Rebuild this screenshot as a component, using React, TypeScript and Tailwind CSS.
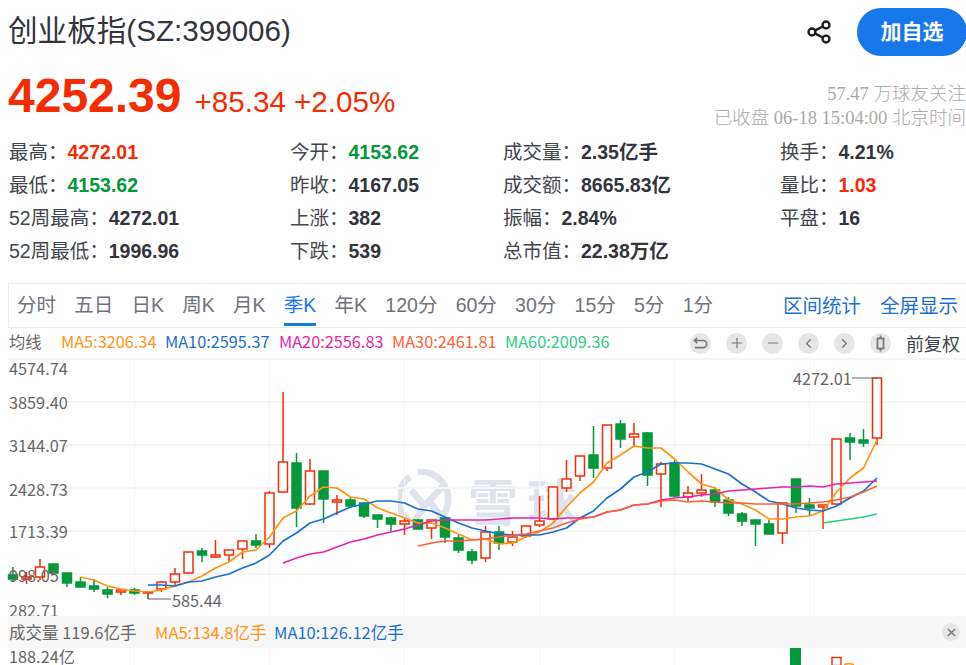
import type { ReactNode } from "react";
import { Minus, Plus, ChevronLeft, ChevronRight } from "lucide-react";

const RED = "#f52c02";
const GREEN = "#03983a";
const SANS = "font-['Liberation_Sans','Noto_Sans_CJK_SC',sans-serif]";
const CJK = "font-['Noto_Sans_CJK_SC',sans-serif]";

type Stat = { label: string; value: string; tone?: "red" | "green" };

const STAT_COLUMNS: { width: string; rows: Stat[] }[] = [
  {
    width: "w-[281px]",
    rows: [
      { label: "最高：", value: "4272.01", tone: "red" },
      { label: "最低：", value: "4153.62", tone: "green" },
      { label: "52周最高：", value: "4272.01" },
      { label: "52周最低：", value: "1996.96" },
    ],
  },
  {
    width: "w-[213px]",
    rows: [
      { label: "今开：", value: "4153.62", tone: "green" },
      { label: "昨收：", value: "4167.05" },
      { label: "上涨：", value: "382" },
      { label: "下跌：", value: "539" },
    ],
  },
  {
    width: "w-[277px]",
    rows: [
      { label: "成交量：", value: "2.35亿手" },
      { label: "成交额：", value: "8665.83亿" },
      { label: "振幅：", value: "2.84%" },
      { label: "总市值：", value: "22.38万亿" },
    ],
  },
  {
    width: "w-[150px]",
    rows: [
      { label: "换手：", value: "4.21%" },
      { label: "量比：", value: "1.03", tone: "red" },
      { label: "平盘：", value: "16" },
    ],
  },
];

const PERIODS = ["分时", "五日", "日K", "周K", "月K", "季K", "年K", "120分", "60分", "30分", "15分", "5分", "1分"];

const MA_LEGEND = [
  { text: "MA5:3206.34", className: "text-[#ff9414] w-[104px] mb-[4px]" },
  { text: "MA10:2595.37", className: "text-[#1a6fd0] w-[114px] mb-[4px]" },
  { text: "MA20:2556.83", className: "text-[#e624a8] w-[113px] mb-[4px]" },
  { text: "MA30:2461.81", className: "text-[#ff5f36] w-[113px] mb-[4px]" },
  { text: "MA60:2009.36", className: "text-[#2ecb85] mb-[4px]" },
];

// [wickTop, bodyTop, bodyBottom, wickBottom, 1 = red hollow / 0 = green solid]
const CANDLES: [number, number, number, number, number][] = [
  [567, 575, 579, 582, 0], [572, 577, 579, 584, 1], [559, 567, 577, 580, 1], [564, 564, 573, 573, 0],
  [573, 573, 583, 587, 0], [577, 582, 587, 587, 0], [579, 586, 589, 592, 0], [587, 590, 594, 598, 0],
  [589, 590, 592, 595, 1], [588, 590, 593, 595, 0], [591, 592, 593, 599, 1], [581, 582, 589, 592, 1],
  [568, 574, 582, 585, 1], [552, 552, 573, 574, 1], [548, 551, 555, 562, 0], [540, 555, 557, 558, 1],
  [550, 550, 555, 562, 1], [541, 541, 549, 559, 1], [534, 541, 545, 548, 0], [491, 493, 544, 548, 1],
  [392, 462, 492, 493, 1], [453, 463, 508, 527, 0], [459, 471, 504, 505, 1], [471, 471, 499, 523, 0],
  [495, 500, 502, 515, 1], [497, 500, 506, 508, 0], [502, 503, 516, 518, 0], [515, 515, 519, 528, 0],
  [517, 518, 524, 531, 0], [519, 521, 524, 535, 1], [519, 520, 529, 529, 0], [520, 520, 528, 539, 1],
  [518, 518, 537, 543, 0], [535, 538, 550, 553, 0], [549, 552, 560, 564, 0], [526, 532, 558, 562, 1],
  [526, 532, 543, 550, 0], [531, 537, 542, 546, 1], [526, 526, 536, 538, 1], [496, 521, 525, 527, 1],
  [487, 487, 519, 520, 1], [460, 479, 488, 492, 1], [456, 456, 476, 481, 1], [426, 455, 468, 478, 0],
  [425, 425, 468, 471, 1], [420, 424, 439, 448, 0], [423, 434, 437, 446, 1], [432, 433, 475, 486, 0],
  [462, 464, 474, 507, 1], [460, 463, 496, 497, 0], [486, 493, 497, 501, 1], [474, 490, 493, 497, 1],
  [487, 490, 502, 507, 0], [497, 500, 513, 516, 0], [512, 514, 521, 526, 0], [520, 520, 524, 546, 0],
  [520, 524, 534, 534, 0], [503, 503, 533, 544, 1], [479, 479, 506, 513, 0], [498, 505, 508, 516, 0],
  [505, 505, 507, 529, 1], [439, 439, 504, 505, 1], [433, 438, 442, 460, 0], [429, 440, 443, 447, 0],
  [378, 378, 438, 445, 1],
];

const candleX = (i: number) => 13 + i * 13.5;
const toPoints = (start: number, ys: number[]) =>
  ys.map((y, i) => `${candleX(start + i).toFixed(1)},${y}`).join(" ");

const MA5 = [577, 580, 586, 589, 591, 592, 590, 586, 582, 576, 568, 562, 552, 550, 537, 518, 511, 496, 487, 488, 497, 499, 508, 513, 518, 523, 523, 528, 534, 540, 539, 544, 543, 537, 532, 523, 507, 493, 482, 463, 455, 446, 448, 448, 459, 472, 484, 488, 500, 504, 510, 519, 519, 517, 516, 511, 492, 478, 468, 440];
const MA10 = [585, 585, 586, 582, 581, 577, 574, 568, 563, 555, 541, 533, 523, 519, 513, 507, 504, 501, 501, 503, 509, 511, 517, 523, 528, 531, 534, 535, 535, 535, 532, 528, 518, 511, 498, 489, 477, 472, 464, 463, 463, 464, 469, 474, 484, 492, 501, 504, 508, 510, 511, 506, 498, 491, 478];
const MA20 = [563, 558, 554, 552, 547, 542, 539, 535, 532, 529, 525, 521, 520, 520, 520, 520, 519, 518, 518, 518, 519, 518, 518, 517, 512, 510, 505, 504, 500, 498, 497, 495, 494, 491, 490, 489, 488, 487, 487, 486, 487, 484, 483, 482, 481];
const MA30 = [546, 543, 541, 541, 540, 539, 537, 535, 534, 531, 528, 523, 519, 517, 512, 510, 505, 504, 501, 500, 502, 501, 502, 503, 503, 504, 504, 504, 504, 503, 502, 500, 497, 492, 486];
const MA60 = [523, 521, 519, 517, 514];

const Y_LABELS = [
  { text: "4574.74", top: "top-[357px]" },
  { text: "3859.40", top: "top-[391px]" },
  { text: "3144.07", top: "top-[434px]" },
  { text: "2428.73", top: "top-[478px]" },
  { text: "1713.39", top: "top-[520px]" },
  { text: "998.05", top: "top-[564px]" },
  { text: "282.71", top: "top-[599px]" },
];

const CandleStickIcon = () => (
  <svg viewBox="0 0 21 21" className="w-[21px] h-[21px]" fill="none" stroke="#777" strokeWidth="1.8">
    <rect x="7.5" y="5.5" width="6" height="10" />
    <path d="M10.5 2.5v3M10.5 15.5v3" />
  </svg>
);

const UndoIcon = () => (
  <svg viewBox="0 0 21 21" className="w-[21px] h-[21px]" fill="none" stroke="#777" strokeWidth="1.7">
    <path d="M4.5 7.5h8.5a3.6 3.6 0 0 1 0 7.2H5" />
    <path d="M7.3 4.8 4.5 7.5l2.8 2.7" />
  </svg>
);

const ToolButton = ({ children }: { children: ReactNode }) => (
  <span className="flex items-center justify-center w-[21px] h-[21px] rounded-full bg-[#e6e6e6] text-[#777]">
    {children}
  </span>
);

const PriceChart = () => (
  <svg width="966" height="665" viewBox="0 0 966 665" fill="none">
    {/* grid */}
    <g stroke="#f5f5f5">
      {[359, 402, 445, 488, 531, 574].map((y) => (
        <path key={y} d={`M8 ${y}H966`} strokeWidth="2" />
      ))}
      {[134.5, 269.5, 404.5, 539.5, 674.5, 809.5].map((x) => (
        <path key={x} d={`M${x} 359V665`} strokeWidth="1" />
      ))}
    </g>

    {/* candles */}
    {CANDLES.map(([wickTop, bodyTop, bodyBottom, wickBottom, up], i) => {
      const x = candleX(i);
      const color = up ? RED : GREEN;
      return (
        <g key={i} stroke={color} strokeWidth="1.5">
          <path d={`M${x} ${wickTop}V${bodyTop}M${x} ${bodyBottom}V${wickBottom}`} />
          <rect
            x={x - 4.5}
            y={bodyTop}
            width={9}
            height={Math.max(bodyBottom - bodyTop, 1)}
            fill={up ? "#fff" : color}
          />
        </g>
      );
    })}

    {/* moving averages */}
    <g strokeWidth="1.7" strokeLinejoin="round">
      <polyline points={toPoints(5, MA5)} stroke="#ff9414" />
      <polyline points={toPoints(10, MA10)} stroke="#1a6fd0" />
      <polyline points={toPoints(20, MA20)} stroke="#e624a8" />
      <polyline points={toPoints(30, MA30)} stroke="#ff5f36" />
      <polyline points={toPoints(60, MA60)} stroke="#2ecb85" />
    </g>

    {/* high / low markers */}
    <path d="M148 593V599H171M852 378H877" stroke="#666" strokeWidth="1" />

    {/* volume bars under the band */}
    <rect x="790" y="648" width="11" height="17" fill={GREEN} />
    <rect x="832" y="657.5" width="9" height="8" fill="#fff" stroke={RED} strokeWidth="1.4" />
    <path d="M844 664.5Q849 663 854 664.5" stroke="#ff9414" strokeWidth="1.5" />
  </svg>
);

const Watermark = () => (
  <div className="absolute left-[398px] top-[469px] flex items-center gap-[10px]">
    <svg width="60" height="60" viewBox="0 0 60 60" fill="none" stroke="#dfe3ee" strokeWidth="6.5">
      <path d="M20 3A27 27 0 1 1 26 57" />
      <path d="M12 8A27 27 0 0 0 15 54L27 37L13 21" />
      <path d="M45 17L31 32L44 48" />
    </svg>
    <span className={`${CJK} text-[50px] leading-[60px] tracking-[9px] font-bold text-[#dfe3ee]`}>雪球</span>
  </div>
);

export default function App() {
  return (
    <div className={`relative w-[966px] h-[665px] overflow-hidden bg-white ${SANS} text-[#33353c]`}>
      {/* title row */}
      <div className="flex items-center h-[48px] mt-[8px] pl-[8px]">
        <h1 className="text-[29.6px] font-normal leading-[48px] -mt-[2px]">创业板指(SZ:399006)</h1>
        <svg viewBox="0 0 24 24" className="ml-auto mr-[25px] w-[26px] h-[26px]" fill="none" stroke="#1c1d22" strokeWidth="2.2">
          <circle cx="18.5" cy="5.5" r="3.2" />
          <circle cx="18.5" cy="18.5" r="3.2" />
          <circle cx="5.5" cy="12" r="3.2" />
          <path d="M8.4 10.5l7.2-3.6M8.4 13.5l7.2 3.6" />
        </svg>
        <button className="w-[110px] h-[48px] rounded-full bg-[#1877ea] text-white text-[21px] font-bold shrink-0 -mr-px">
          加自选
        </button>
      </div>

      {/* price row */}
      <div className="flex items-start pl-[8px] h-[66px] mt-[8px]">
        <div className="flex items-baseline" style={{ color: RED }}>
          <span className="text-[48px] leading-[64px] font-bold">4252.39</span>
          <span className="text-[29.6px] leading-[64px] ml-[13px]">+85.34 +2.05%</span>
        </div>
        <div className="ml-auto mt-[18px] text-right text-[18.5px] leading-[24px] text-[#a9a9a9] whitespace-nowrap font-['Liberation_Serif','Noto_Sans_CJK_SC',serif] font-light">
          <p>57.47 万球友关注</p>
          <p>已收盘 06-18 15:04:00 北京时间</p>
        </div>
      </div>

      {/* quote stats */}
      <div className="flex pl-[9px] h-[132px] mt-[6px]">
        {STAT_COLUMNS.map((col) => (
          <div key={col.rows[0].label} className={`${col.width} shrink-0`}>
            {col.rows.map((row) => (
              <div key={row.label} className="h-[33px] leading-[33px] text-[19.5px] whitespace-nowrap">
                <span className="text-[#44464d]">{row.label}</span>
                <span
                  className={`font-bold ${
                    row.tone === "red" ? "text-[#f52c02]" : row.tone === "green" ? "text-[#03983a]" : ""
                  }`}
                >
                  {row.value}
                </span>
              </div>
            ))}
          </div>
        ))}
      </div>

      {/* period tabs */}
      <div className="flex items-center h-[45px] ml-[8px] mt-[15px] pl-[8px] pr-[8px] border border-r-0 border-[#ececec] text-[19.5px] text-[#70727a]">
        <div className="flex gap-[18.25px] h-[42px] self-start">
          {PERIODS.map((p) => (
            <span
              key={p}
              className={
                p === "季K"
                  ? "flex items-center text-[#1877ea] border-b-[3px] border-[#1877ea] pt-[5px]"
                  : "flex items-center pt-[2px]"
              }
            >
              {p}
            </span>
          ))}
        </div>
        <div className="ml-auto flex gap-[19px] mt-[2px] text-[#1a6fd0]">
          <span>区间统计</span>
          <span>全屏显示</span>
        </div>
      </div>

      {/* MA legend and chart tools */}
      <div className={`${CJK} flex items-center h-[30px] pl-[9px] text-[16.3px] whitespace-nowrap`}>
        <span className="text-[#666] w-[52px] mb-[4px]">均线</span>
        {MA_LEGEND.map((m) => (
          <span key={m.text} className={m.className}>
            {m.text}
          </span>
        ))}
        <div className="ml-auto mr-[6px] flex items-center gap-[15px]">
          <ToolButton>
            <UndoIcon />
          </ToolButton>
          <ToolButton>
            <Plus size={16} strokeWidth={1.8} />
          </ToolButton>
          <ToolButton>
            <Minus size={16} strokeWidth={1.8} />
          </ToolButton>
          <ToolButton>
            <ChevronLeft size={15} strokeWidth={2} />
          </ToolButton>
          <ToolButton>
            <ChevronRight size={15} strokeWidth={2} />
          </ToolButton>
          <ToolButton>
            <CandleStickIcon />
          </ToolButton>
          <span className="text-[18px] text-[#44464d]">前复权</span>
        </div>
      </div>

      {/* chart canvas */}
      <div className="absolute inset-0">
        <Watermark />
        <div className="absolute inset-0">
          <PriceChart />
        </div>
        <div className={`${CJK} text-[16.3px] leading-[22px] text-[#666]`}>
          {Y_LABELS.map((l) => (
            <span key={l.text} className={`absolute left-[9px] ${l.top}`}>
              {l.text}
            </span>
          ))}
          <span className="absolute left-[172px] top-[589px]">585.44</span>
          <span className="absolute left-[793px] top-[367px]">4272.01</span>
          <span className="absolute left-[9px] top-[647px] leading-[18px]">188.24亿</span>
        </div>

        {/* volume legend band */}
        <div className={`${CJK} absolute left-[8px] right-0 top-[616px] h-[32px] bg-[#f7f7f7] flex items-center pl-[1px] text-[16.5px] whitespace-nowrap`}>
          <span className="text-[#666] w-[146px]">成交量 119.6亿手</span>
          <span className="text-[#ff9414] w-[119px]">MA5:134.8亿手</span>
          <span className="text-[#1a6fd0]">MA10:126.12亿手</span>
          <span className="ml-auto mr-[6px] flex items-center justify-center w-[18px] h-[18px] rounded-full bg-[#e6e6e6]">
            <svg viewBox="0 0 10 10" className="w-[9px] h-[9px]" stroke="#777" strokeWidth="1.5">
              <path d="M1 1l8 8M9 1l-8 8" />
            </svg>
          </span>
        </div>
      </div>
    </div>
  );
}
